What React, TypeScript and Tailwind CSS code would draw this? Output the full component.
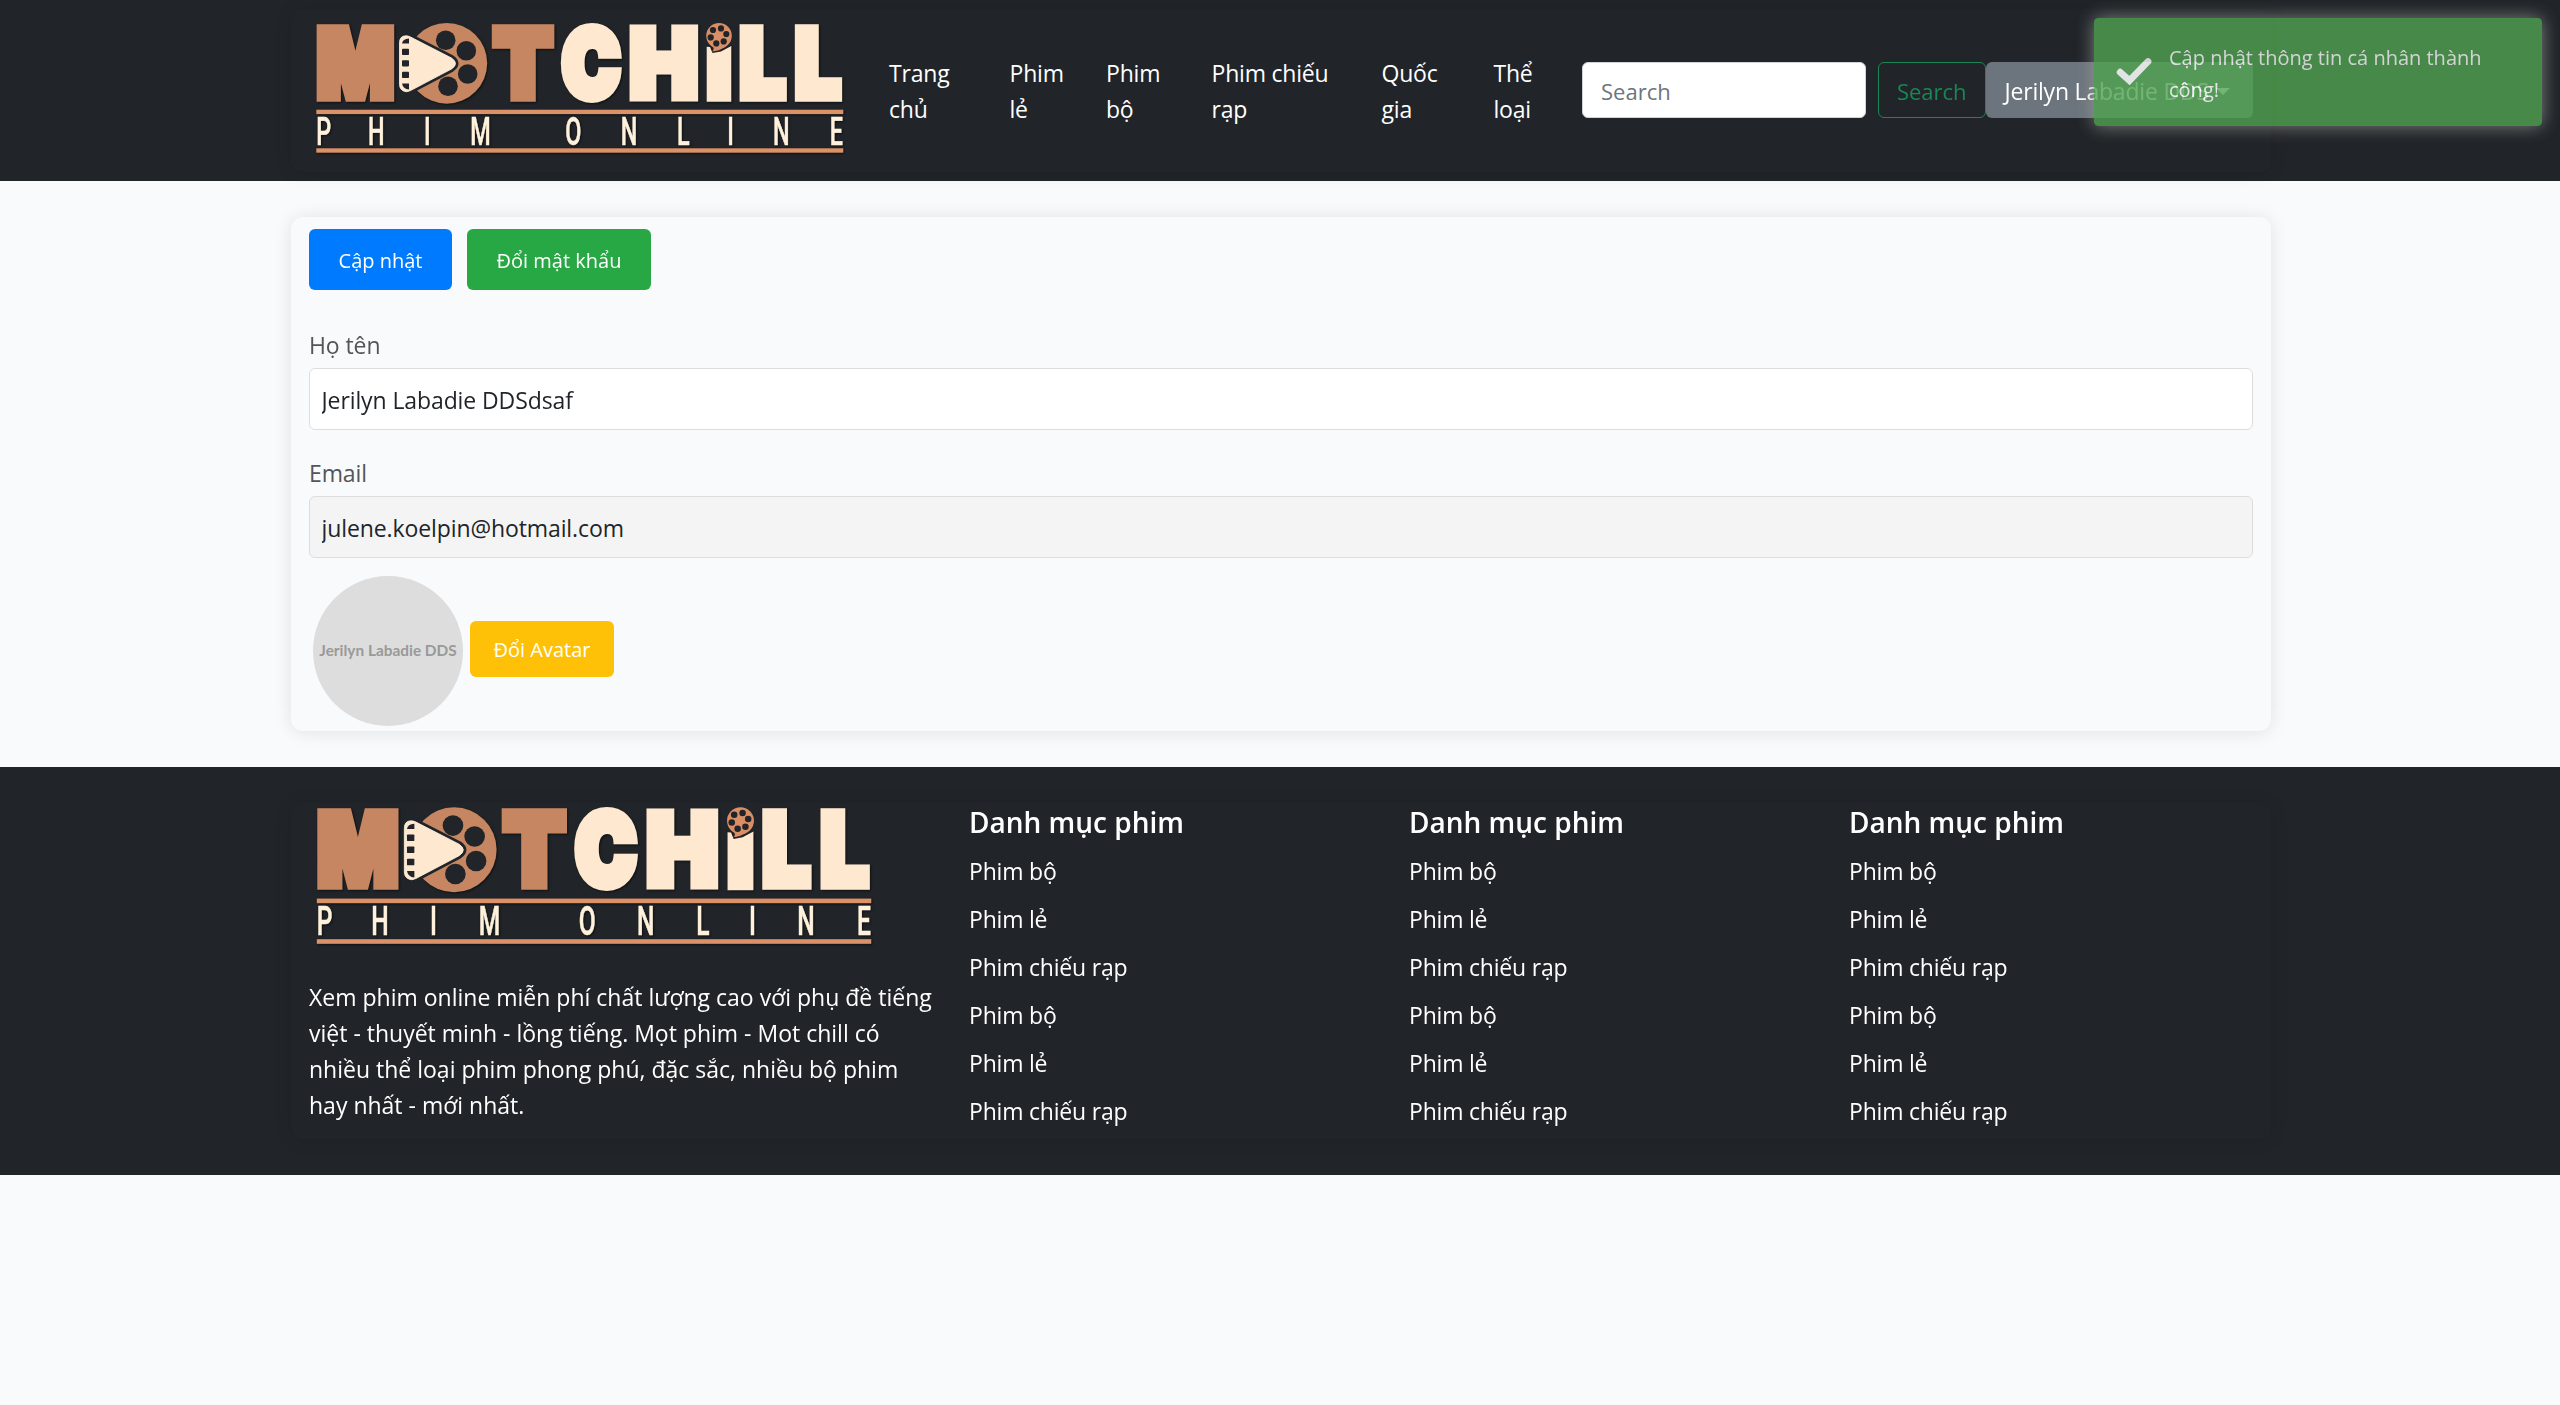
import type { ReactNode } from "react";

const wordmark = [
  { ch: "M", x: 8.9, sx: 0.855, tone: "fill-[#c68661] stroke-[#c68661]" },
  { ch: "T", x: 185.8, sx: 0.909, tone: "fill-[#c68661] stroke-[#c68661]" },
  { ch: "C", x: 254.2, sx: 0.82, tone: "fill-[#ffe8d0] stroke-[#ffe8d0]" },
  { ch: "H", x: 321.7, sx: 0.967, tone: "fill-[#ffe8d0] stroke-[#ffe8d0]" },
  { ch: "L", x: 431.9, sx: 0.845, tone: "fill-[#ffe8d0] stroke-[#ffe8d0]" },
  { ch: "L", x: 487.2, sx: 0.845, tone: "fill-[#ffe8d0] stroke-[#ffe8d0]" },
];

const tagline: [string, number][] = [
  ["P", 15.7], ["H", 68.3], ["I", 119.2], ["M", 172.5], ["O", 265.3],
  ["N", 321], ["L", 375.2], ["I", 422.5], ["N", 473.3], ["E", 528.3],
];

const reelHoles = [[137.7, 24.3], [158.3, 34.7], [159.7, 58], [140, 70.3]];
const smallHoles = [[-6, -5.7], [2, -7.3], [7.3, -1.7], [4.7, 5.7], [-2.7, 7.7], [-8.3, 1.7]];

const playShape =
  "M91.5 27 Q91.5 19.8 98 19.8 Q100 19.8 102.5 21 L143.5 42 Q151.5 47.5 143.5 53 L102.5 74.6 Q98 77 94.5 74.5 Q91.5 72.5 91.5 68.5 Z";

function Logo({ className }: { className: string }) {
  return (
    <svg viewBox="0 0 544 144" className={className} role="img" aria-label="Motchill phim online">
      <g className="drop-shadow-[1.5px_1.5px_1px_rgba(0,0,0,0.55)]">
        {wordmark.map((l, i) => (
          <text
            key={i}
            transform={`translate(${l.x} 81.2) scale(${l.sx} 1)`}
            fontSize="94"
            strokeWidth="9"
            strokeLinejoin="miter"
            vectorEffect="non-scaling-stroke"
            className={`font-['Inter',sans-serif] font-black ${l.tone}`}
          >
            {l.ch}
          </text>
        ))}
        <circle cx="138.8" cy="47.3" r="40.4" fill="#c68661" />
        <path d="M398.7 30.7 L402 31 L404.5 37 L413 35.5 L423.3 30 V85.7 H398.7 Z" fill="#ffe8d0" />
        <rect x="8.3" y="93.7" width="527" height="4.4" fill="#dc9268" />
        <rect x="8.3" y="132.3" width="527" height="4.4" fill="#dc9268" />
        {tagline.map(([ch, x], i) => (
          <text
            key={i}
            transform={`translate(${x} 128.7) scale(0.6 1)`}
            textAnchor="middle"
            fontSize="39"
            strokeWidth="0.6"
            className="fill-[#fff1dc] stroke-[#fff1dc] font-['Roboto',sans-serif] font-medium"
          >
            {ch}
          </text>
        ))}
      </g>
      {reelHoles.map(([x, y], i) => (
        <circle key={i} cx={x} cy={y} r="9.8" fill="#212529" />
      ))}
      <path d={playShape} fill="#ffe8d0" stroke="#212529" strokeWidth="6" strokeLinejoin="round" />
      <path d={playShape} fill="#ffe8d0" stroke="#fff6e4" strokeWidth="0.8" />
      <path d="M94 27.6 Q94.5 23 101 22.5 V27.6 Z" fill="#212529" />
      <rect x="94" y="32.8" width="7" height="6.2" rx="0.8" fill="#212529" />
      <rect x="94" y="44.2" width="7" height="6.2" rx="0.8" fill="#212529" />
      <rect x="94" y="55.8" width="7" height="6.2" rx="0.8" fill="#212529" />
      <path d="M94 67.4 H101 V73.6 Q95 73 94 67.4 Z" fill="#212529" />
      <path d="M403 28 Q408 33 404 35.5 Q411 35 417 31 Z" fill="#d98e66" />
      <circle cx="411" cy="19.7" r="12.8" fill="#d98e66" />
      {smallHoles.map(([x, y], i) => (
        <circle key={i} cx={411 + x} cy={19.7 + y} r="3.1" fill="#212529" />
      ))}
    </svg>
  );
}

function Panel({ className, children }: { className: string; children: ReactNode }) {
  return (
    <div className={`ml-[291px] w-[1980px] rounded-xl px-[18px] shadow-[0_1px_18px_rgba(0,0,0,0.1)] ${className}`}>
      {children}
    </div>
  );
}

function NavLinks() {
  return (
    <nav className="ml-[37px] flex pt-px leading-9 tracking-[-0.2px] text-white">
      <a className="w-[120.5px]">Trang<br />chủ</a>
      <a className="w-[96.5px]">Phim<br />lẻ</a>
      <a className="w-[105.5px]">Phim<br />bộ</a>
      <a className="w-[170px]">Phim chiếu<br />rạp</a>
      <a className="w-[112px]">Quốc<br />gia</a>
      <a className="w-[88.5px]">Thể<br />loại</a>
    </nav>
  );
}

function Field({ label, value, tone, readOnly }: { label: string; value: string; tone: string; readOnly?: boolean }) {
  return (
    <div>
      <label className="block leading-9 tracking-[-0.1px] text-[#555]">{label}</label>
      <input
        defaultValue={value}
        readOnly={readOnly}
        className={`mt-[5.5px] block h-[61.5px] w-full rounded-[6px] border-[1.5px] border-[#ddd] px-[11.5px] pt-[3px] tracking-[-0.1px] text-[#212529] ${tone}`}
      />
    </div>
  );
}

const categories = ["Phim bộ", "Phim lẻ", "Phim chiếu rạp", "Phim bộ", "Phim lẻ", "Phim chiếu rạp"];

function CategoryColumn() {
  return (
    <div className="w-[440px] shrink-0 pt-px">
      <h5 className="h-[43px] text-[28px] leading-9 font-semibold">Danh mục phim</h5>
      <ul className="tracking-[-0.2px]">
        {categories.map((c, i) => (
          <li key={i} className="h-12 leading-[48px]">{c}</li>
        ))}
      </ul>
    </div>
  );
}

function Toast() {
  return (
    <div className="absolute top-[18px] right-[18px] flex h-[108px] w-[448px] items-start rounded-[4.5px] bg-[#51a351] pt-[22px] pl-[22px] text-white opacity-80 shadow-[0_0_18px_#999]">
      <svg viewBox="0 0 36 36" className="mt-[15px] size-9 shrink-0" fill="none" stroke="#fff" strokeWidth="6.8" strokeLinecap="round" strokeLinejoin="miter">
        <path d="M4.2 17.2 L13.5 25.5 L32 6.5" />
      </svg>
      <p className="ml-[17px] w-[340px] pt-[2px] text-[20px] leading-[31.5px]">Cập nhật thông tin cá nhân thành công!</p>
    </div>
  );
}

export default function App() {
  return (
    <div className="relative min-h-[1405px] w-[2560px] overflow-hidden bg-[#f8fafc] font-['Open_Sans','Noto_Sans',sans-serif] text-[23px]">
      <header className="h-[181px] bg-[#212529] pt-[9px]">
        <Panel className="flex h-[163px] items-center">
          <Logo className="-mt-[5px] -ml-px h-[144px] w-[544px] shrink-0" />
          <NavLinks />
          <div className="-mt-px flex h-14 shrink-0 text-[22px]">
            <input
              placeholder="Search"
              className="mr-3 h-14 w-[284px] rounded-[6px] border-[1.5px] border-[#ced4da] bg-white px-[18px] pt-[2px] placeholder:text-[#6c757d]"
            />
            <button className="w-[107.5px] rounded-[6px] border-[1.5px] border-[#198754] pt-[2px] text-[#198754]">Search</button>
            <button className="flex w-[267.5px] items-center rounded-[6px] bg-[#6c757d] pt-[2px] pl-[19px] text-[23px] tracking-[-0.2px] whitespace-nowrap text-white">
              Jerilyn Labadie DDS
              <span className="ml-[7px] border-x-[7px] border-t-[7px] border-x-transparent border-t-white" />
            </button>
          </div>
        </Panel>
      </header>

      <main className="py-9">
        <Panel className="h-[514px] pt-3">
          <div className="flex gap-[15px] text-[20px] text-white">
            <button className="h-[61px] w-[143px] rounded-[6px] bg-[#007bff] pt-[2px]">Cập nhật</button>
            <button className="h-[61px] w-[184px] rounded-[6px] bg-[#28a745] pt-[2px]">Đổi mật khẩu</button>
          </div>
          <div className="mt-[36.5px] flex flex-col gap-[25px]">
            <Field label="Họ tên" value="Jerilyn Labadie DDSdsaf" tone="bg-white" />
            <Field label="Email" value="julene.koelpin@hotmail.com" tone="bg-[#f4f4f4]" readOnly />
          </div>
          <div className="mt-[18.5px] ml-1 flex items-center gap-[7px]">
            <div className="flex size-[150px] items-center justify-center rounded-full bg-[#ddd] font-['Lato',sans-serif] text-[15.4px] font-bold text-[#999]">
              <span className="pb-px whitespace-nowrap">Jerilyn Labadie DDS</span>
            </div>
            <button className="-mt-1 h-14 w-36 rounded-[6px] bg-[#ffc107] pt-[2px] text-[20px] text-white">Đổi Avatar</button>
          </div>
        </Panel>
      </main>

      <footer className="h-[408px] bg-[#212529] pt-9 text-white">
        <Panel className="flex h-[336px]">
          <div className="w-[660px] shrink-0">
            <Logo className="-mt-[3px] -ml-px h-[151.5px] w-[572.5px]" />
            <p className="mt-[27.5px] w-[632px] leading-9">
              Xem phim online miễn phí chất lượng cao với phụ đề tiếng việt - thuyết minh - lồng tiếng. Mọt phim - Mot
              chill có nhiều thể loại phim phong phú, đặc sắc, nhiều bộ phim hay nhất - mới nhất.
            </p>
          </div>
          <CategoryColumn />
          <CategoryColumn />
          <CategoryColumn />
        </Panel>
      </footer>
      <Toast />
    </div>
  );
}
